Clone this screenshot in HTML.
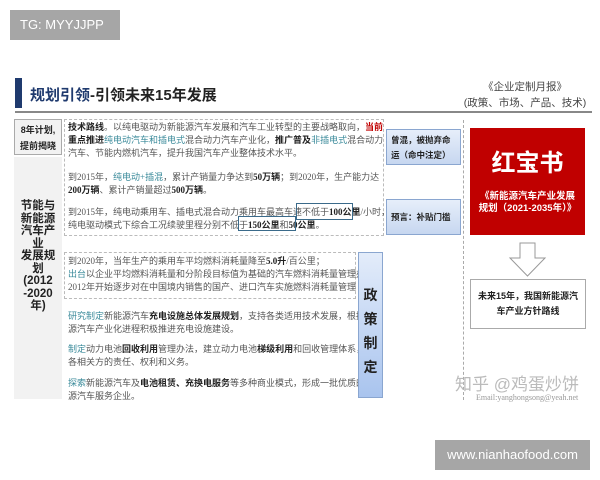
<!DOCTYPE html>
<html><head><meta charset="utf-8"><style>
*{margin:0;padding:0;box-sizing:border-box}
body{width:600px;height:480px;background:#fff;position:relative;overflow:hidden;font-family:"Liberation Sans","Noto Sans CJK SC",sans-serif;color:#444}
.a{position:absolute}
.t{font-size:9px;line-height:13px;white-space:nowrap;color:#555;font-family:"Liberation Serif","Noto Sans CJK SC",sans-serif}
.b{font-weight:bold;color:#222}
.g{color:#3a8a9a}
.r{color:#c00000;font-weight:bold}
.dot{border:1px dashed #bbb}
.call{background:linear-gradient(#e6eefa,#c7d7f0);border:1px solid #8aa6d0;font-size:8.5px;font-weight:bold;color:#222;padding:3px 4px;white-space:nowrap}
</style></head><body>
<div class="a" style="left:10px;top:10px;width:110px;height:30px;background:#a6a6a6;color:#fff;font-size:13px;line-height:30px;padding-left:10px">TG: MYYJJPP</div>

<div class="a" style="left:15px;top:78px;width:7px;height:30px;background:#1f3a6e"></div>
<div class="a" style="left:30px;top:84px;font-size:15px;font-weight:bold;color:#222;white-space:nowrap"><span style="color:#1f3a6e">规划引领</span>-引领未来15年发展</div>
<div class="a" style="left:455px;top:79px;width:140px;text-align:center;font-size:10.5px;color:#444;line-height:16px">《企业定制月报》<br>(政策、市场、产品、技术)</div>
<div class="a" style="left:15px;top:111px;width:577px;height:2px;background:#888"></div>

<div class="a" style="left:14px;top:119px;width:48px;height:36px;border:1px solid #aaa;background:#f2f2f2;font-size:9px;font-weight:bold;color:#222;text-align:center;line-height:16px;padding-top:2px">8年计划,<br>提前揭晓</div>
<div class="a" style="left:14px;top:157px;width:48px;height:242px;background:#f2f2f2"></div>
<div class="a" style="left:14px;top:200px;width:48px;text-align:center;font-size:11.5px;font-weight:bold;color:#222;line-height:12.5px">节能与<br>新能源<br>汽车产<br>业<br>发展规<br>划<br>(2012<br>-2020<br>年)</div>

<div class="a dot" style="left:64px;top:119px;width:320px;height:117px"></div>
<div class="a t" style="left:68px;top:121px">
<span class="b">技术路线</span>。以纯电驱动为新能源汽车发展和汽车工业转型的主要战略取向，<span class="r">当前</span><br>
<span class="b">重点推进</span><span class="g">纯电动汽车和插电式</span>混合动力汽车产业化，<span class="b">推广普及</span><span class="g">非插电式</span>混合动力<br>
汽车、节能内燃机汽车，提升我国汽车产业整体技术水平。</div>
<div class="a t" style="left:68px;top:171px">到2015年，<span class="g">纯电动+插混</span>，累计产销量力争达到<span class="b">50万辆</span>；到2020年，生产能力达<br><span class="b">200万辆</span>、累计产销量超过<span class="b">500万辆</span>。</div>
<div class="a t" style="left:68px;top:206px">到2015年，纯电动乘用车、插电式混合动力乘用车最高车速不低于<span class="b">100公里</span>/小时，<br>纯电驱动模式下综合工况续驶里程分别不低于<span class="b">150公里</span>和<span class="b">50公里</span>。</div>
<div class="a" style="left:296px;top:203px;width:57px;height:17px;border:1.5px solid #3a6a8a"></div>
<div class="a" style="left:238px;top:216px;width:58px;height:15px;border:1.5px solid #3a6a8a"></div>

<div class="a dot" style="left:64px;top:252px;width:292px;height:47px"></div>
<div class="a t" style="left:68px;top:255px">到2020年，当年生产的乘用车平均燃料消耗量降至<span class="b">5.0升</span>/百公里；<br><span class="g">出台</span>以企业平均燃料消耗量和分阶段目标值为基础的汽车燃料消耗量管理办<br>2012年开始逐步对在中国境内销售的国产、进口汽车实施燃料消耗量管理</div>
<div class="a t" style="left:68px;top:310px"><span class="g">研究制定</span>新能源汽车<span class="b">充电设施总体发展规划</span>，支持各类适用技术发展，根据<br>源汽车产业化进程积极推进充电设施建设。</div>
<div class="a t" style="left:68px;top:343px"><span class="g">制定</span>动力电池<span class="b">回收利用</span>管理办法，建立动力电池<span class="b">梯级利用</span>和回收管理体系，<br>各相关方的责任、权利和义务。</div>
<div class="a t" style="left:68px;top:377px"><span class="g">探索</span>新能源汽车及<span class="b">电池租赁、充换电服务</span>等多种商业模式，形成一批优质的<br>源汽车服务企业。</div>

<div class="a" style="left:358px;top:252px;width:25px;height:146px;background:linear-gradient(#e3ecfa,#a9c4ee);border:1px solid #8aa6d0;font-size:14px;font-weight:bold;color:#222;text-align:center;line-height:24px;padding-top:30px">政<br>策<br>制<br>定</div>

<div class="a call" style="left:386px;top:129px;width:75px;height:36px;line-height:15px">曾混，被抛弃命<br>运（命中注定）</div>
<div class="a call" style="left:386px;top:199px;width:75px;height:36px;line-height:28px">预言：补贴门槛</div>

<div class="a" style="left:463px;top:120px;height:280px;border-left:1px dashed #aaa"></div>
<div class="a" style="left:470px;top:128px;width:115px;height:107px;background:#c00000;color:#fff;text-align:center">
<div style="font-size:24px;font-weight:bold;margin-top:21px;line-height:30px">红宝书</div>
<div style="font-size:9.5px;font-weight:bold;line-height:12px;margin-top:12px;white-space:nowrap">《新能源汽车产业发展<br>规划（2021-2035年）》</div></div>

<svg class="a" style="left:508px;top:242px" width="40" height="36"><path d="M12 1H27V16H37L19.5 34L2 16H12Z" fill="#fff" stroke="#999" stroke-width="1"/></svg>
<div class="a" style="left:470px;top:279px;width:116px;height:50px;border:1px solid #aaa;font-size:9px;font-weight:bold;color:#222;text-align:center;line-height:15px;padding-top:9px">未来15年，我国新能源汽<br>车产业方针路线</div>

<div class="a" style="left:455px;top:370px;font-size:17px;color:#bbb;white-space:nowrap">知乎 @鸡蛋炒饼</div>
<div class="a" style="left:476px;top:393px;font-size:8px;color:#999;font-family:'Liberation Serif',serif;white-space:nowrap">Email:yanghongsong@yeah.net</div>

<div class="a" style="left:435px;top:440px;width:155px;height:30px;background:#a6a6a6;color:#fff;font-size:13px;line-height:30px;text-align:center">www.nianhaofood.com</div>
</body></html>
